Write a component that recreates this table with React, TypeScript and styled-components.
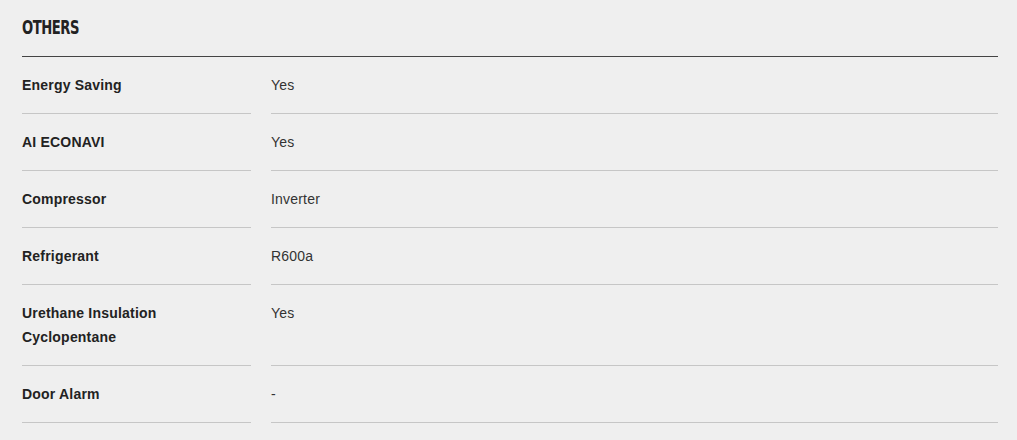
import React from 'react';
import styled, { createGlobalStyle } from 'styled-components';

const GlobalStyle = createGlobalStyle`
  * {
    margin: 0;
    padding: 0;
    box-sizing: border-box;
  }

  html, body {
    width: 100%;
    height: 100%;
    background-color: #efefef;
    font-family: "Liberation Sans", Arial, sans-serif;
  }
`;

const Section = styled.section`
  padding: 0 19px 0 22px;
`;

const Heading = styled.h2`
  height: 57px;
  padding-top: 15px;
  border-bottom: 1px solid #444;
  font-family: "DejaVu Sans Condensed", "DejaVu Sans", sans-serif;
  font-stretch: condensed;
  font-weight: bold;
  font-size: 19px;
  line-height: 24px;
  letter-spacing: -0.6px;
  color: #222;
`;

// the source uses a narrow display face; squeeze the condensed one to match
const HeadingText = styled.span`
  display: inline-block;
  transform: scaleX(0.77);
  transform-origin: left center;
`;

const SpecList = styled.dl`
  display: flex;
  flex-direction: column;
`;

const Row = styled.div`
  display: grid;
  grid-template-columns: 229px 1fr;
  column-gap: 20px;
`;

const Label = styled.dt`
  padding: 16px 40px 16px 0;
  border-bottom: 1px solid #c6c6c6;
  font-size: 14px;
  font-weight: bold;
  line-height: 24px;
  letter-spacing: 0.2px;
  color: #222;
`;

const Value = styled.dd`
  padding: 16px 0;
  border-bottom: 1px solid #c6c6c6;
  font-size: 14px;
  line-height: 24px;
  letter-spacing: 0.2px;
  color: #333;
`;

const specs = [
  { label: 'Energy Saving', value: 'Yes' },
  { label: 'AI ECONAVI', value: 'Yes' },
  { label: 'Compressor', value: 'Inverter' },
  { label: 'Refrigerant', value: 'R600a' },
  { label: 'Urethane Insulation Cyclopentane', value: 'Yes' },
  { label: 'Door Alarm', value: '-' },
];

const App: React.FC = () => {
  return (
    <>
      <GlobalStyle />
      <Section>
        <Heading>
          <HeadingText>OTHERS</HeadingText>
        </Heading>
        <SpecList>
          {specs.map((s) => (
            <Row key={s.label}>
              <Label>{s.label}</Label>
              <Value>{s.value}</Value>
            </Row>
          ))}
        </SpecList>
      </Section>
    </>
  );
};

export default App;
